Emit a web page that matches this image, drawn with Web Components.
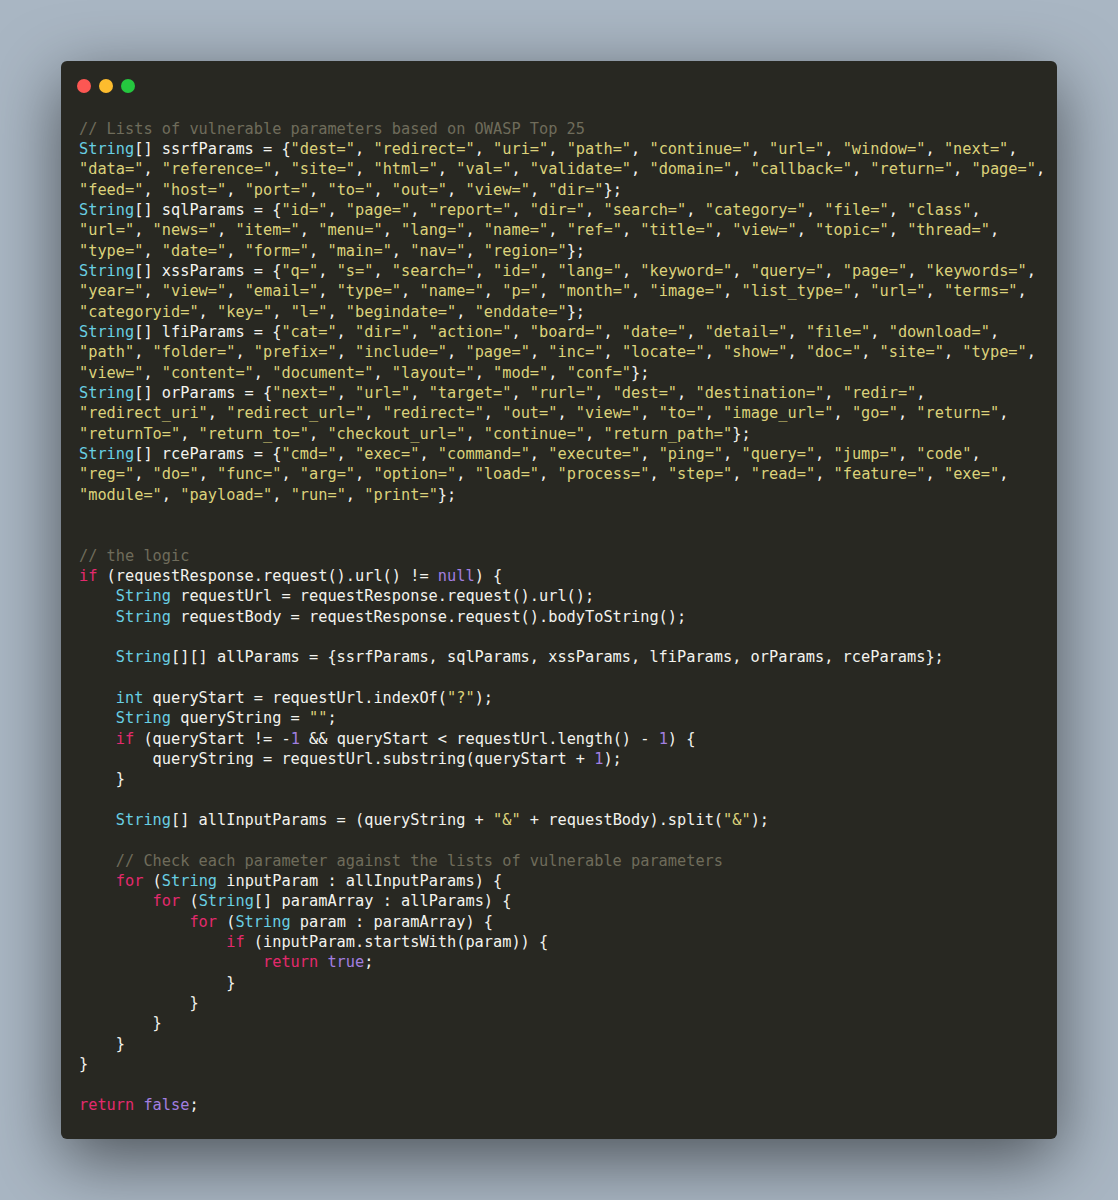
<!DOCTYPE html>
<html>
<head>
<meta charset="utf-8">
<style>
  html, body { margin: 0; padding: 0; background: #a9b6c3; }
</style>
</head>
<body>
<code-page>
  <code-window>
    <code-block>// Lists of vulnerable parameters based on OWASP Top 25
String[] ssrfParams = {"dest=", "redirect=", "uri=", "path=", "continue=", "url=", "window=", "next=",
"data=", "reference=", "site=", "html=", "val=", "validate=", "domain=", "callback=", "return=", "page=",
"feed=", "host=", "port=", "to=", "out=", "view=", "dir="};
String[] sqlParams = {"id=", "page=", "report=", "dir=", "search=", "category=", "file=", "class",
"url=", "news=", "item=", "menu=", "lang=", "name=", "ref=", "title=", "view=", "topic=", "thread=",
"type=", "date=", "form=", "main=", "nav=", "region="};
String[] xssParams = {"q=", "s=", "search=", "id=", "lang=", "keyword=", "query=", "page=", "keywords=",
"year=", "view=", "email=", "type=", "name=", "p=", "month=", "image=", "list_type=", "url=", "terms=",
"categoryid=", "key=", "l=", "begindate=", "enddate="};
String[] lfiParams = {"cat=", "dir=", "action=", "board=", "date=", "detail=", "file=", "download=",
"path", "folder=", "prefix=", "include=", "page=", "inc=", "locate=", "show=", "doc=", "site=", "type=",
"view=", "content=", "document=", "layout=", "mod=", "conf="};
String[] orParams = {"next=", "url=", "target=", "rurl=", "dest=", "destination=", "redir=",
"redirect_uri", "redirect_url=", "redirect=", "out=", "view=", "to=", "image_url=", "go=", "return=",
"returnTo=", "return_to=", "checkout_url=", "continue=", "return_path="};
String[] rceParams = {"cmd=", "exec=", "command=", "execute=", "ping=", "query=", "jump=", "code",
"reg=", "do=", "func=", "arg=", "option=", "load=", "process=", "step=", "read=", "feature=", "exe=",
"module=", "payload=", "run=", "print="};


// the logic
if (requestResponse.request().url() != null) {
    String requestUrl = requestResponse.request().url();
    String requestBody = requestResponse.request().bodyToString();

    String[][] allParams = {ssrfParams, sqlParams, xssParams, lfiParams, orParams, rceParams};

    int queryStart = requestUrl.indexOf("?");
    String queryString = "";
    if (queryStart != -1 &amp;&amp; queryStart &lt; requestUrl.length() - 1) {
        queryString = requestUrl.substring(queryStart + 1);
    }

    String[] allInputParams = (queryString + "&amp;" + requestBody).split("&amp;");

    // Check each parameter against the lists of vulnerable parameters
    for (String inputParam : allInputParams) {
        for (String[] paramArray : allParams) {
            for (String param : paramArray) {
                if (inputParam.startsWith(param)) {
                    return true;
                }
            }
        }
    }
}

return false;</code-block>
  </code-window>
</code-page>
<script>
class CodePage extends HTMLElement {
  constructor() {
    super();
    this.attachShadow({ mode: 'open' });
    this.shadowRoot.innerHTML = `
      <style>
        :host {
          display: block;
          box-sizing: border-box;
          width: 1118px;
          height: 1200px;
          padding: 61px;
          background: #a9b6c3;
          overflow: hidden;
        }
      </style>
      <slot></slot>
    `;
  }
}

class CodeWindow extends HTMLElement {
  constructor() {
    super();
    this.attachShadow({ mode: 'open' });
    this.shadowRoot.innerHTML = `
      <style>
        :host {
          display: flex;
          flex-direction: column;
          box-sizing: border-box;
          height: 1078px;
          padding: 18px 16px 0;
          background: #282822;
          border-radius: 6px;
          box-shadow: 0 20px 68px rgba(0,0,0,0.55);
        }
        .dots {
          display: flex;
          gap: 8px;
          height: 14px;
          margin-bottom: 25.8px;
        }
        .dot {
          width: 14px;
          height: 14px;
          border-radius: 50%;
        }
        .red { background: #fc5753; }
        .yellow { background: #fdbc2e; }
        .green { background: #25c73f; }
      </style>
      <div class="dots">
        <span class="dot red"></span>
        <span class="dot yellow"></span>
        <span class="dot green"></span>
      </div>
      <slot></slot>
    `;
  }
}

class CodeBlock extends HTMLElement {
  constructor() {
    super();
    this.attachShadow({ mode: 'open' });
  }

  connectedCallback() {
    // the script runs after the parser, so the text is already there
    const lines = this.textContent.split('\n').map(l => `<div class="line">${this.highlight(l)}</div>`);
    this.textContent = '';
    this.shadowRoot.innerHTML = `
      <style>
        :host {
          display: block;
          margin-left: 2px;
          font-family: "DejaVu Sans Mono", monospace;
          font-size: 15.295px;
          line-height: 20.34px;
          color: #f3f3ee;
        }
        .line { height: 20.34px; white-space: pre; }
        .c { color: #6f6c5b; }
        .s { color: #dcd27a; }
        .t { color: #68cfe3; }
        .k { color: #e32a6d; }
        .n { color: #a27fe0; }
      </style>
      ${lines.join('')}
    `;
  }

  highlight(src) {
    const esc = s => s.replace(/&/g, '&amp;').replace(/</g, '&lt;');
    const re = /(\/\/.*)|("[^"]*")|\b(String|int)\b|\b(if|for|return)\b|\b(null|true|false|\d+)\b/g;
    let out = '';
    let last = 0;
    for (const m of src.matchAll(re)) {
      out += esc(src.slice(last, m.index));
      const cls = m[1] ? 'c' : m[2] ? 's' : m[3] ? 't' : m[4] ? 'k' : 'n';
      out += `<span class="${cls}">${esc(m[0])}</span>`;
      last = m.index + m[0].length;
    }
    return out + esc(src.slice(last));
  }
}

customElements.define('code-page', CodePage);
customElements.define('code-window', CodeWindow);
customElements.define('code-block', CodeBlock);
</script>
</body>
</html>
